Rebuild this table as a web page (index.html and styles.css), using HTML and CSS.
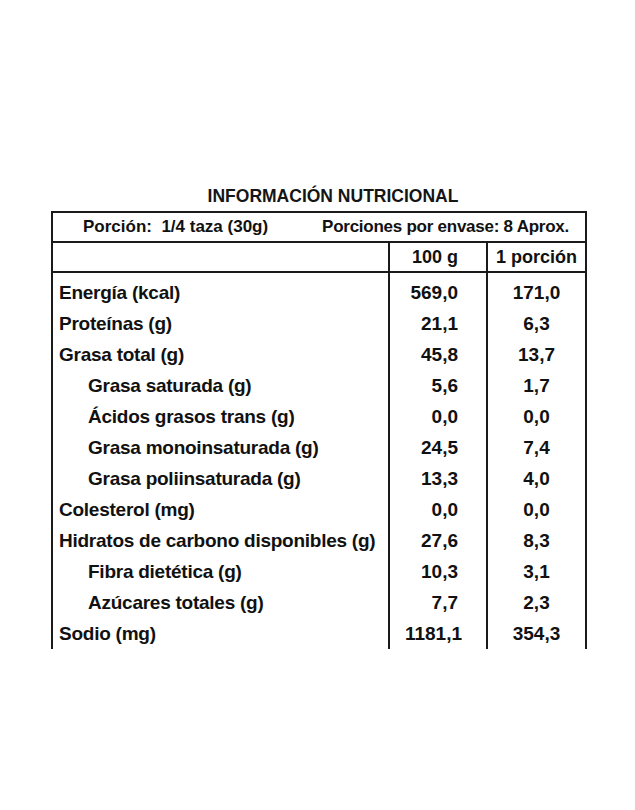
FILE: index.html
```html
<!DOCTYPE html>
<html lang="es">
<head>
<meta charset="utf-8">
<title>Información nutricional</title>
<link rel="stylesheet" href="styles.css">
</head>
<body>
<main class="label">
  <h1 class="title">INFORMACIÓN NUTRICIONAL</h1>
  <div class="table">
    <div class="serving">
      <span>Porción:&nbsp; 1/4 taza (30g)</span>
      <span class="per-pack">Porciones por envase: 8 Aprox.</span>
    </div>
    <div class="head blank"></div>
    <div class="head num">100 g</div>
    <div class="head num2">1 porción</div>

    <div class="cell name first">Energía (kcal)</div>
    <div class="cell num first">569,0</div>
    <div class="cell num2 first">171,0</div>

    <div class="cell name">Proteínas (g)</div>
    <div class="cell num">21,1</div>
    <div class="cell num2">6,3</div>

    <div class="cell name">Grasa total (g)</div>
    <div class="cell num">45,8</div>
    <div class="cell num2">13,7</div>

    <div class="cell name sub">Grasa saturada (g)</div>
    <div class="cell num">5,6</div>
    <div class="cell num2">1,7</div>

    <div class="cell name sub">Ácidos grasos trans (g)</div>
    <div class="cell num">0,0</div>
    <div class="cell num2">0,0</div>

    <div class="cell name sub">Grasa monoinsaturada (g)</div>
    <div class="cell num">24,5</div>
    <div class="cell num2">7,4</div>

    <div class="cell name sub">Grasa poliinsaturada (g)</div>
    <div class="cell num">13,3</div>
    <div class="cell num2">4,0</div>

    <div class="cell name">Colesterol (mg)</div>
    <div class="cell num">0,0</div>
    <div class="cell num2">0,0</div>

    <div class="cell name">Hidratos de carbono disponibles (g)</div>
    <div class="cell num">27,6</div>
    <div class="cell num2">8,3</div>

    <div class="cell name sub">Fibra dietética (g)</div>
    <div class="cell num">10,3</div>
    <div class="cell num2">3,1</div>

    <div class="cell name sub">Azúcares totales (g)</div>
    <div class="cell num">7,7</div>
    <div class="cell num2">2,3</div>

    <div class="cell name">Sodio (mg)</div>
    <div class="cell num wide">1181,1</div>
    <div class="cell num2">354,3</div>
  </div>
</main>
</body>
</html>
```
FILE: styles.css
```css
* { box-sizing: border-box; }

html, body {
  margin: 0;
  padding: 0;
  background: #ffffff;
}

body {
  font-family: "Liberation Sans", Arial, sans-serif;
  font-weight: bold;
  color: #111111;
}

.label {
  width: 536px;
  margin-left: 51px;
  padding-top: 186px;
}

.title {
  margin: 0 0 5px 0;
  padding-left: 28px;
  font-size: 17.5px;
  line-height: 20px;
  font-weight: bold;
  text-align: center;
  color: #151515;
}

.table {
  display: grid;
  grid-template-columns: 335px 98px 99px;
  border-top: 2px solid #1a1a1a;
  border-left: 2px solid #1a1a1a;
  border-right: 2px solid #1a1a1a;
}

.serving {
  grid-column: 1 / -1;
  display: flex;
  justify-content: space-between;
  height: 30px;
  padding: 0 16px 0 30px;
  font-size: 17px;
  line-height: 28px;
  border-bottom: 2px solid #1a1a1a;
  white-space: pre;
}

.per-pack {
  letter-spacing: -0.25px;
}

.head {
  height: 30px;
  font-size: 18px;
  line-height: 28px;
  border-bottom: 2px solid #1a1a1a;
}

.cell {
  height: 31px;
  line-height: 31px;
  white-space: nowrap;
}

.cell.first {
  height: 35px;
  padding-top: 4px;
}

.name {
  font-size: 19px;
  letter-spacing: -0.25px;
  padding-left: 6px;
}

.name.sub {
  padding-left: 35px;
}

.num {
  border-left: 2px solid #1a1a1a;
  text-align: right;
  padding-right: 28px;
  font-size: 19px;
}

.num.wide {
  padding-right: 24px;
}

.num2 {
  border-left: 2px solid #1a1a1a;
  text-align: center;
  font-size: 19px;
}

.head.num, .head.num2 {
  font-size: 18px;
}
```
